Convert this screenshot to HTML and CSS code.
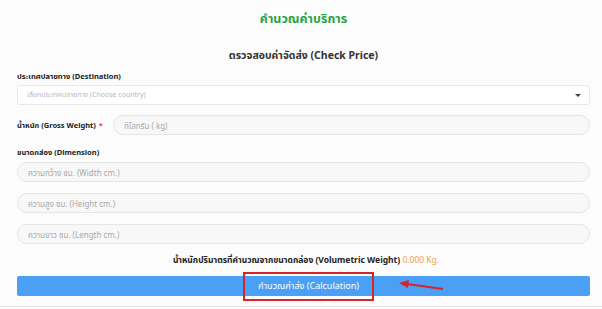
FILE: index.html
```html
<!DOCTYPE html>
<html lang="th">
<head>
    <meta charset="UTF-8">
    <title>คำนวณค่าบริการ</title>
    <link rel="stylesheet" href="styles.css">
</head>
<body>
    <div class="page">
        <h1 class="title">คำนวณค่าบริการ</h1>
        <h2 class="subtitle">ตรวจสอบค่าจัดส่ง (Check Price)</h2>

        <label class="label">ประเทศปลายทาง (Destination)</label>
        <div class="select">
            <span class="placeholder">เลือกประเทศปลายทาง (Choose country)</span>
            <span class="caret"></span>
        </div>

        <div class="weight-row">
            <label class="label">น้ำหนัก (Gross Weight) <span class="req">*</span></label>
            <input class="field" type="text" placeholder="กิโลกรัม ( kg)">
        </div>

        <label class="label dim-label">ขนาดกล่อง (Dimension)</label>
        <div class="dims">
            <input class="field" type="text" placeholder="ความกว้าง ซม. (Width cm.)">
            <input class="field" type="text" placeholder="ความสูง ซม. (Height cm.)">
            <input class="field" type="text" placeholder="ความยาว ซม. (Length cm.)">
        </div>

        <p class="volume">น้ำหนักปริมาตรที่คำนวณจากขนาดกล่อง (Volumetric Weight) <span class="kg">0.000 Kg.</span></p>

        <div class="calc-wrap">
            <button class="calc-btn">คำนวณค่าส่ง (Calculation)</button>
            <div class="highlight"></div>
            <svg class="arrow" width="50" height="14" viewBox="0 0 50 14">
                <line x1="46" y1="10" x2="10" y2="5" stroke="#d9232a" stroke-width="2"/>
                <polygon points="2,4 12,1 11,9" fill="#d9232a"/>
            </svg>
        </div>
    </div>
</body>
</html>
```

FILE: styles.css
```css
* {
    margin: 0;
    padding: 0;
    box-sizing: border-box;
}

body {
    background: #fdfcfc;
    font-family: "Noto Sans", "Noto Sans Thai", "Liberation Sans", sans-serif;
    color: #222;
}

.page {
    width: 602px;
    height: 307px;
    padding: 8px 12px 0 17px;
    border-bottom: 1px solid #e4e4e4;
}

.title {
    text-align: center;
    font-size: 12.5px;
    line-height: 22px;
    font-weight: 700;
    color: #27a544;
}

.subtitle {
    text-align: center;
    font-size: 10.5px;
    line-height: 16px;
    font-weight: 700;
    color: #333;
    margin-top: 17px;
}

.label {
    display: block;
    font-size: 7.5px;
    line-height: 12px;
    font-weight: 700;
    color: #222;
}

.page > .label {
    margin-top: 7px;
}

.req {
    color: #e84a4a;
    margin-left: 1px;
}

.select {
    margin-top: 3px;
    height: 20px;
    background: #fff;
    border: 1px solid #e8e8e8;
    border-radius: 3px;
    display: flex;
    align-items: center;
    justify-content: space-between;
    padding: 0 8px 0 9px;
}

.placeholder {
    font-size: 7px;
    color: #b8b8b8;
}

.caret {
    width: 0;
    height: 0;
    border-left: 3px solid transparent;
    border-right: 3px solid transparent;
    border-top: 3px solid #444;
}

.weight-row {
    display: flex;
    align-items: center;
    margin-top: 10px;
}

.weight-row .label {
    width: 96px;
}

.field {
    display: block;
    width: 100%;
    height: 20px;
    background: #f8f8f8;
    border: 1px solid #e6e6e6;
    border-radius: 10px;
    padding: 0 10px;
    font-family: inherit;
    font-size: 8px;
    outline: none;
}

.field::placeholder {
    color: #a8a8a8;
}

.weight-row .field {
    flex: 1;
}

.page > .dim-label {
    margin-top: 11px;
}

.dims {
    display: flex;
    flex-direction: column;
    gap: 11px;
    margin-top: 4px;
}

.volume {
    text-align: center;
    font-size: 8.5px;
    line-height: 12px;
    font-weight: 700;
    color: #222;
    margin-top: 10px;
    padding-left: 5px;
}

.kg {
    color: #f0a04a;
    font-weight: 400;
}

.calc-wrap {
    position: relative;
    margin-top: 10px;
}

.calc-btn {
    display: block;
    width: 100%;
    height: 20px;
    background: #4aa0f4;
    border: none;
    border-radius: 2px;
    color: #fff;
    font-family: inherit;
    font-size: 9px;
    padding-left: 10px;
}

.highlight {
    position: absolute;
    left: 226px;
    top: -4px;
    width: 131px;
    height: 29px;
    border: 2px solid #d9232a;
}

.arrow {
    position: absolute;
    left: 380px;
    top: 3px;
}
```
